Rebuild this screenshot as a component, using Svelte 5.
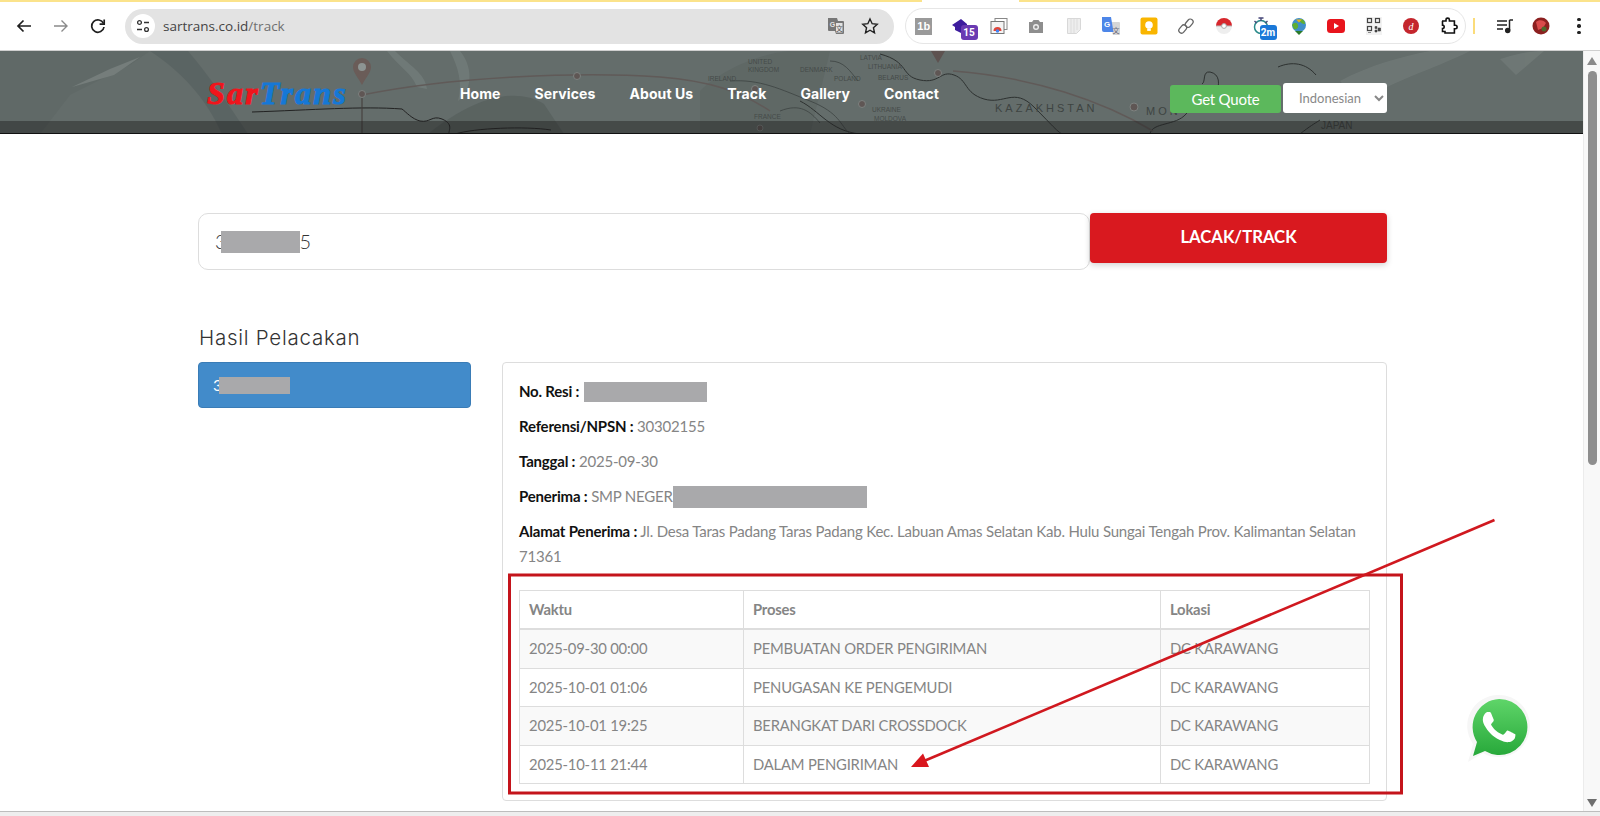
<script>
	var rows = [
		{ time: '2025-09-30 00:00', process: 'PEMBUATAN ORDER PENGIRIMAN', place: 'DC KARAWANG' },
		{ time: '2025-10-01 01:06', process: 'PENUGASAN KE PENGEMUDI', place: 'DC KARAWANG' },
		{ time: '2025-10-01 19:25', process: 'BERANGKAT DARI CROSSDOCK', place: 'DC KARAWANG' },
		{ time: '2025-10-11 21:44', process: 'DALAM PENGIRIMAN', place: 'DC KARAWANG' }
	];
	var nav = ['Home', 'Services', 'About Us', 'Track', 'Gallery', 'Contact'];
</script>

<div class="window">
	<div class="tabstrip"><span class="tabgap"></span></div>
	<div class="toolbar">
		<button class="tool" aria-label="Back">
			<svg width="18" height="18" viewBox="0 0 18 18" fill="none" stroke="#1f1f1f" stroke-width="1.7"><path d="M16 9H3M8.5 3.5 3 9l5.500 5.500" /></svg>
		</button>
		<button class="tool" aria-label="Forward">
			<svg width="18" height="18" viewBox="0 0 18 18" fill="none" stroke="#8a8a8a" stroke-width="1.4"><path d="M2 9h13M9.500 3.500 15 9l-5.500 5.500" /></svg>
		</button>
		<button class="tool" aria-label="Reload">
			<svg width="18" height="18" viewBox="0 0 18 18" fill="none" stroke="#1f1f1f" stroke-width="1.7"><path d="M14.500 6.500A6.200 6.200 0 1 0 15 10" /><path d="M15.200 2.500v4.600h-4.600" /></svg>
		</button>
		<div class="omnibox">
			<span class="siteinfo">
				<svg width="16" height="16" viewBox="0 0 16 16" fill="none" stroke="#333" stroke-width="1.300"><circle cx="4.500" cy="4.500" r="1.900" /><path d="M9 4.500h5M2 11.500h5" /><circle cx="11.500" cy="11.500" r="1.900" /></svg>
			</span>
			<span class="url">sartrans.co.id<span class="urlpath">/track</span></span>
			<svg class="translate" width="20" height="20" viewBox="0 0 20 20"><path d="M2 2h9l1 3h5a1 1 0 0 1 1 1v11a1 1 0 0 1-1 1h-7l-1-3H3a1 1 0 0 1-1-1z" fill="#777" /><rect x="10" y="7" width="6.500" height="9.500" fill="#e3e3e3" /><text x="6.500" y="11" font-size="7" font-weight="700" fill="#e3e3e3" text-anchor="middle" font-family="Liberation Sans, sans-serif">G</text><text x="13.200" y="14.500" font-size="7" fill="#555" text-anchor="middle" font-family="Noto Sans CJK SC, sans-serif">文</text></svg>
			<svg class="star" width="18" height="18" viewBox="0 0 18 18" fill="none" stroke="#222" stroke-width="1.400"><path d="m9 2 2.150 4.700 5.100.600-3.800 3.450 1.050 5.050L9 13.250 4.500 15.800l1.050-5.050-3.800-3.450 5.100-.600z" /></svg>
		</div>
		<div class="extensions">
			<span class="ext"><span class="onebee">1b</span></span>
			<span class="ext">
				<svg width="20" height="20" viewBox="0 0 20 20"><path d="M10 3 1 9l3 2v3l6 3 6-3V8z" fill="#3d1c9e" /></svg>
				<span class="badge purple">15</span>
			</span>
			<span class="ext">
				<svg width="18" height="18" viewBox="0 0 18 18"><rect x="5" y="1.500" width="12" height="11" fill="#fff" stroke="#888" /><rect x="1" y="4.500" width="13" height="12" fill="#f4f4f4" stroke="#777" /><path d="M3.500 14a4 4 0 0 1 8 0z" fill="#e0463a" /><circle cx="7.500" cy="14" r="1.700" fill="#4285f4" /></svg>
			</span>
			<span class="ext">
				<svg width="18" height="18" viewBox="0 0 18 18"><path d="M2 5h3l1.500-2h5L13 5h3v11H2z" fill="#8e8e8e" /><circle cx="9" cy="10" r="3" fill="#eee" /><circle cx="9" cy="10" r="1.600" fill="#8e8e8e" /></svg>
			</span>
			<span class="ext">
				<svg width="18" height="18" viewBox="0 0 18 18"><path d="M2.500 1.500h13v11l-4 4h-9z" fill="#eeeeee" stroke="#d8d8d8" /><path d="M6 2v14M9 2v14M12 2v11" stroke="#dcdcdc" /></svg>
			</span>
			<span class="ext">
				<svg width="20" height="20" viewBox="0 0 20 20"><path d="M9 6h9a1 1 0 0 1 1 1v11a1 1 0 0 1-1 1h-6z" fill="#d6d6d6" /><path d="M1 1h9l2.500 15H3a2 2 0 0 1-2-2z" fill="#4d86e8" /><text x="6" y="11" font-size="8" font-weight="700" fill="#fff" text-anchor="middle" font-family="Liberation Sans, sans-serif">G</text><text x="15" y="16.500" font-size="7" fill="#667" text-anchor="middle" font-family="Noto Sans CJK SC, sans-serif">文</text></svg>
			</span>
			<span class="ext">
				<svg width="18" height="18" viewBox="0 0 18 18"><rect x="0.500" y="0.500" width="17" height="17" rx="2" fill="#f9b500" /><circle cx="9" cy="8" r="3.800" fill="#fff" /><rect x="7.200" y="11.500" width="3.600" height="2.400" fill="#fff" /></svg>
			</span>
			<span class="ext">
				<svg width="18" height="18" viewBox="0 0 18 18" fill="none" stroke="#666" stroke-width="1.300"><rect x="9.500" y="1.500" width="5.500" height="9" rx="2.700" transform="rotate(40 12 6)" /><rect x="3" y="7.500" width="5.500" height="9" rx="2.700" transform="rotate(40 5.700 12)" /></svg>
			</span>
			<span class="ext">
				<svg width="18" height="18" viewBox="0 0 18 18"><circle cx="9" cy="9" r="8" fill="#eee" /><path d="M1 9a8 8 0 0 1 16 0z" fill="#d8262c" /><path d="M1 9h16" stroke="#bbb" /><circle cx="9" cy="9" r="2.400" fill="#fff" stroke="#aaa" /></svg>
			</span>
			<span class="ext">
				<svg width="18" height="20" viewBox="0 0 18 20"><circle cx="9" cy="11" r="6.500" fill="none" stroke="#2a8a8a" stroke-width="1.500" /><path d="M6.500 2h5M9 2v3M2.500 5l2 2M15.500 5l-2 2" stroke="#447" stroke-width="1.300" /></svg>
				<span class="badge blue">2m</span>
			</span>
			<span class="ext">
				<svg width="20" height="20" viewBox="0 0 20 20"><circle cx="10" cy="9" r="7" fill="#3f8fc9" /><path d="M3 9c2-3 5-3 6 0s-2 5-4 4zM11 3c3 0 5 2 5 5-2 0-6-1-5-5z" fill="#5fae32" /><path d="M6 15h8l-4 4z" fill="#2c7a2a" /><path d="M7 3.500h6l-3 3z" fill="#e8b21a" /></svg>
			</span>
			<span class="ext">
				<svg width="18" height="14" viewBox="0 0 18 14"><rect width="18" height="14" rx="3.500" fill="#e8141c" /><path d="M7 4v6l5-3z" fill="#fff" /></svg>
			</span>
			<span class="ext">
				<svg width="16" height="18" viewBox="0 0 16 18"><rect width="16" height="18" fill="#f2f2f2" /><g fill="none" stroke="#444" stroke-width="1.200"><rect x="1.500" y="1.500" width="4" height="4" /><rect x="9.500" y="1.500" width="4" height="4" /><rect x="1.500" y="9.500" width="4" height="4" /></g><path d="M9 9.500h2v2H9zM12 11h2.500v3H12zM9 13h2v2H9zM2 15.500h3" fill="#444" stroke="#444" stroke-width=".6" /></svg>
			</span>
			<span class="ext">
				<svg width="18" height="18" viewBox="0 0 18 18"><circle cx="9" cy="9" r="8" fill="#c4262d" /><text x="9" y="12.500" font-size="10" fill="#fff" text-anchor="middle" font-family="Liberation Serif, serif" font-style="italic">d</text></svg>
			</span>
			<span class="ext">
				<svg width="18" height="18" viewBox="0 0 18 18" fill="none" stroke="#111" stroke-width="1.600"><path d="M2 4h4V2.800a1.700 1.700 0 0 1 3.400 0V4h5v4.300h1a1.700 1.700 0 0 1 0 3.400h-1V16H5v-1.500H2.500v-3a1.700 1.700 0 0 0 0-3.400V4z" /></svg>
			</span>
		</div>
		<span class="divider"></span>
		<button class="tool music" aria-label="Media">
			<svg width="18" height="18" viewBox="0 0 18 18" fill="none" stroke="#222" stroke-width="1.500"><path d="M1 4h10M1 8h10M1 12h6" /><path d="M13.500 3v10.500" /><path d="M13.500 3H17" /><circle cx="11.700" cy="13.500" r="2" fill="#222" /></svg>
		</button>
		<span class="avatar"><svg width="18" height="18" viewBox="0 0 18 18"><circle cx="9" cy="9" r="8.500" fill="#8c2020" /><path d="M4 5c3-3 8-2 10 1l-3 5-5 2z" fill="#d94b4b" /><circle cx="12" cy="12" r="2.500" fill="#4a6a2c" /></svg></span>
		<span class="dots" aria-hidden="true"><i></i><i></i><i></i></span>
	</div>

	<div class="viewport">
		<div class="page">
			<header class="site-header">
				<svg class="map" viewBox="0 0 1583 83" width="1583" height="83" aria-hidden="true">
					<g opacity="0.45">
						<path d="M0 0h150l-20 14-60 30-30 39H0z" fill="#5c6563" />
						<path d="M150 0c30 20 55 45 72 83h26c-20-30-40-60-60-83z" fill="#505a5a" />
						<path d="M72 36 110 18l30-12-26 18z" fill="#8a9290" />
						<path d="M395 0c15 15 30 22 32 38l-10-2c-6-15-18-20-30-36zM460 0c12 14 14 38-2 50 5-18 0-34-8-50z" fill="#7e8986" />
						<path d="M1340 30c30-16 60-24 90-30h40c-40 20-80 30-110 52z" fill="#7a8381" />
						<path d="M1500 8c20-6 30-8 44-8l-28 24z" fill="#7c8583" />
						<path d="M700 40c20-20 60-38 90-40h40l-20 83H700z" fill="#59625f" />
						<path d="M428 83c50-40 90-46 116-30l20 30z" fill="#4e5754" />
					</g>
					<path d="M252 61c60-2 110-6 150-3 4 3 10 10 18 12 10 2 12-6 22-2 14 6 4 14 8 15M455 83c20-6 70-8 96-4" fill="none" stroke="#222" stroke-width="1" />
					<path d="M800 50c20 10 30 30 60 33M880 3c30 8 20 22 40 26s20-10 34-5 10 18 30 24 30-12 50 8 26 28 30 27M1150 83c2-12 26-8 36-20 8-10 22-4 30-20 4-10 4-20-6-22-8-1-4 10-8 12M1278 16c14-6 28-4 38 8M1300 83c10-8 14-10 20-14" fill="none" stroke="#2d3130" stroke-width="1" />
					<path d="M730 30c30-2 50 8 80 20s30 24 40 33M780 60c20-8 30 0 40 12M830 10c14 0 20 10 28 20" fill="none" stroke="#3c4241" stroke-width=".8" />
					<path d="M362 44C450 26 580 20 660 26c50 4 80 14 110 34" fill="none" stroke="#605a58" stroke-width="1.500" />
					<path d="M953 20c80 6 150 30 200 60" fill="none" stroke="#605a58" stroke-width="1.500" />
					<path d="M362 43V83" stroke="#403a38" stroke-width="1" />
					<path d="M362 34c-5-9-9-13-9-18a9 9 0 0 1 18 0c0 5-4 9-9 18z" fill="#6a5c58" />
					<circle cx="362" cy="16" r="4" fill="#8d9492" />
					<path d="M931 0h14l-7 12z" fill="#5d5250" />
					<g fill="#5f5654" stroke="#7d8280" stroke-width="1">
						<circle cx="362" cy="43" r="3.500" />
						<circle cx="577" cy="25" r="3.500" />
						<circle cx="755" cy="38" r="3.500" />
						<circle cx="760" cy="77" r="3" />
						<circle cx="862" cy="53" r="3.500" />
						<circle cx="938" cy="22" r="3.500" />
						<circle cx="1134" cy="56" r="4" />
					</g>
					<g font-family="Liberation Sans, sans-serif" fill="#454b49" font-size="6.500">
						<text x="748" y="13">UNITED</text>
						<text x="748" y="21">KINGDOM</text>
						<text x="708" y="30">IRELAND</text>
						<text x="754" y="68">FRANCE</text>
						<text x="860" y="9">LATVIA</text>
						<text x="868" y="18">LITHUANIA</text>
						<text x="800" y="21">DENMARK</text>
						<text x="878" y="29">BELARUS</text>
						<text x="834" y="30">POLAND</text>
						<text x="872" y="61">UKRAINE</text>
						<text x="874" y="70">MOLDOVA</text>
					</g>
					<g font-family="Liberation Sans, sans-serif" fill="#3e4442">
						<text x="995" y="61" font-size="11" letter-spacing="3">KAZAKHSTAN</text>
						<text x="1146" y="64" font-size="11" letter-spacing="3">MON</text>
						<text x="1321" y="78" font-size="10">JAPAN</text>
					</g>
				</svg>
				<span class="band"></span>
				<div class="header-inner">
					<span class="logo"><span class="sar">Sar</span><span class="trans">Trans</span></span>
					<nav>
						{#each nav as item}
							<span class="nav-link">{item}</span>
						{/each}
					</nav>
					<div class="header-actions">
						<span class="quote">Get Quote</span>
						<select class="lang">
							<option>Indonesian</option>
							<option>English</option>
						</select>
					</div>
				</div>
			</header>

			<main class="content">
				<div class="search">
					<div class="search-input">3<span class="redact input-redact"></span>5</div>
					<button class="track-btn">LACAK/TRACK</button>
				</div>

				<h2>Hasil Pelacakan</h2>

				<div class="results">
					<div class="result-tab">3<span class="redact tab-redact"></span></div>
					<section class="card">
						<p><b>No. Resi :</b> <span class="redact resi-redact"></span></p>
						<p><b>Referensi/NPSN :</b> 30302155</p>
						<p><b>Tanggal :</b> 2025-09-30</p>
						<p><b>Penerima :</b> SMP NEGERI<span class="redact name-redact"></span></p>
						<p><b>Alamat Penerima :</b> Jl. Desa Taras Padang Taras Padang Kec. Labuan Amas Selatan Kab. Hulu Sungai Tengah Prov. Kalimantan Selatan 71361</p>
						<table>
							<thead>
								<tr><th class="col-time">Waktu</th><th class="col-proc">Proses</th><th>Lokasi</th></tr>
							</thead>
							<tbody>
								{#each rows as row}
									<tr><td>{row.time}</td><td>{row.process}</td><td>{row.place}</td></tr>
								{/each}
							</tbody>
						</table>
					</section>
				</div>
			</main>
		</div>
		<div class="scrollbar">
			<span class="arrow up"></span>
			<span class="thumb"></span>
			<span class="arrow down"></span>
		</div>
	</div>
	<div class="bottom-strip"></div>

	<svg class="annotation" width="1600" height="816" viewBox="0 0 1600 816" aria-hidden="true">
		<rect x="509.500" y="575" width="892" height="218" fill="none" stroke="#c4141b" stroke-width="3" />
		<path d="M1494.500 520 924 761" stroke="#d0181f" stroke-width="2.600" fill="none" />
		<path d="M911 767 923 753.500 929 767z" fill="#d9161d" />
	</svg>

	<svg class="whatsapp" width="66" height="70" viewBox="0 0 66 70" aria-label="WhatsApp">
		<defs>
			<linearGradient id="wa" x1="0" y1="0" x2="0" y2="1">
				<stop offset="0" stop-color="#5fd569" />
				<stop offset="1" stop-color="#27a83a" />
			</linearGradient>
		</defs>
		<path d="M33 1a31 31 0 0 1 0 62c-6 0-11-1-16-4L2 68l5-18A31 31 0 0 1 33 1z" fill="#f6f6f6" />
		<path d="M33 5a28 28 0 1 1-14 52L7 62l4-14A28 28 0 0 1 33 5z" fill="url(#wa)" />
		<g transform="translate(0.600 0.600) scale(2.700)">
			<path fill="#fff" d="M17.472 14.382c-.297-.149-1.758-.867-2.03-.967-.273-.099-.471-.148-.67.15-.197.297-.767.966-.94 1.164-.173.199-.347.223-.644.075-.297-.15-1.255-.463-2.39-1.475-.883-.788-1.48-1.761-1.653-2.059-.173-.297-.018-.458.13-.606.134-.133.298-.347.446-.52.149-.174.198-.298.298-.497.099-.198.05-.371-.025-.52-.075-.149-.669-1.612-.916-2.207-.242-.579-.487-.5-.669-.51-.173-.008-.371-.01-.57-.01-.198 0-.52.074-.792.372-.272.297-1.04 1.016-1.04 2.479 0 1.462 1.065 2.875 1.213 3.074.149.198 2.096 3.2 5.077 4.487.709.306 1.262.489 1.694.625.712.227 1.36.195 1.871.118.571-.085 1.758-.719 2.006-1.413.248-.694.248-1.289.173-1.413-.074-.124-.272-.198-.57-.347z" />
		</g>
	</svg>
</div>

<style>
	:global(body) {
		margin: 0;
		background: #fff;
	}

	.window {
		position: relative;
		width: 1600px;
		height: 816px;
		overflow: hidden;
		display: flex;
		flex-direction: column;
		font-family: 'Lato', sans-serif;
		color: #858585;
		background: #fff;
	}

	.tabstrip {
		height: 2px;
		background: #fbe38b;
		display: flex;
		padding-left: 922px;
	}

	.tabgap {
		width: 97px;
		background: #fff;
	}

	.toolbar {
		height: 48px;
		display: flex;
		align-items: center;
		padding-left: 5px;
		border-bottom: 1px solid #cfcfcf;
		box-sizing: content-box;
	}

	.tool {
		width: 37px;
		height: 32px;
		padding: 0;
		border: 0;
		background: none;
		display: flex;
		align-items: center;
		justify-content: center;
		flex: none;
	}

	.omnibox {
		margin-left: 9px;
		width: 769px;
		height: 35px;
		border-radius: 18px;
		background: #e3e3e3;
		display: flex;
		align-items: center;
		padding: 0 6px;
		box-sizing: border-box;
		flex: none;
	}

	.siteinfo {
		width: 24px;
		height: 24px;
		border-radius: 50%;
		background: #fff;
		display: flex;
		align-items: center;
		justify-content: center;
		flex: none;
	}

	.url {
		margin-left: 8px;
		font-family: 'Open Sans', sans-serif;
		font-size: 13.500px;
		color: #444;
	}

	.urlpath {
		color: #707070;
	}

	.translate {
		margin-left: auto;
	}

	.star {
		margin: 0 9px 0 15px;
	}

	.extensions {
		margin-left: 11px;
		width: 561px;
		height: 36px;
		border: 1px solid #e6e6e6;
		border-radius: 18px;
		box-sizing: border-box;
		display: flex;
		align-items: center;
		flex: none;
	}

	.ext {
		position: relative;
		width: 37.500px;
		height: 24px;
		display: flex;
		align-items: center;
		justify-content: center;
		flex: none;
	}

	.ext:first-child {
		margin-left: -1px;
	}

	.onebee {
		width: 17px;
		height: 17px;
		background: #9a9a9a;
		color: #fff;
		font: 700 11px/17px 'Liberation Sans', sans-serif;
		text-align: center;
	}

	.badge {
		position: absolute;
		left: 18px;
		top: 11px;
		min-width: 17px;
		height: 15px;
		border-radius: 3px;
		color: #fff;
		font: 700 10px/15px 'Roboto', sans-serif;
		text-align: center;
	}

	.purple {
		background: #6a3ab2;
	}

	.blue {
		background: #1a78d8;
		left: 17px;
	}

	.divider {
		width: 2px;
		height: 16px;
		margin-left: 7px;
		background: #fbdc7a;
		flex: none;
	}

	.music {
		margin-left: 11px;
	}

	.avatar {
		margin-left: 1px;
		width: 34px;
		display: flex;
		justify-content: center;
		flex: none;
	}

	.dots {
		margin-left: 19px;
		display: flex;
		flex-direction: column;
		gap: 3px;
		flex: none;
	}

	.dots i {
		width: 3.500px;
		height: 3.500px;
		border-radius: 50%;
		background: #222;
	}

	.viewport {
		flex: 1;
		display: flex;
		min-height: 0;
	}

	.page {
		flex: 1;
		min-width: 0;
		overflow: hidden;
	}

	.site-header {
		position: relative;
		height: 83px;
		background: #646d6b;
		overflow: hidden;
	}

	.map {
		position: absolute;
		left: 0;
		top: 0;
	}

	.band {
		position: absolute;
		left: 0;
		right: 0;
		bottom: 0;
		height: 13px;
		background: rgba(30, 30, 30, 0.45);
		border-bottom: 1px solid #111;
		box-sizing: border-box;
	}

	.header-inner {
		position: relative;
		width: 1189px;
		margin-left: 198px;
		height: 100%;
		display: flex;
		align-items: flex-start;
	}

	.logo {
		margin: 24px 0 0 9px;
		width: 253px;
		font: italic 700 32px/36px 'Liberation Serif', serif;
		letter-spacing: 2.200px;
		-webkit-text-stroke: 1px currentColor;
	}

	.sar {
		color: #f0141c;
	}

	.trans {
		color: #1578d6;
	}

	nav {
		display: flex;
		gap: 34px;
		margin-top: 34px;
	}

	.nav-link {
		font-family: 'Inter', sans-serif;
		font-weight: 700;
		font-size: 14px;
		line-height: 18px;
		letter-spacing: 0.1px;
		color: #fff;
	}

	.header-actions {
		margin-left: auto;
		margin-top: 32px;
		display: flex;
		align-items: flex-end;
		gap: 2px;
	}

	.quote {
		width: 111px;
		height: 28px;
		border-radius: 3px;
		background: #5cb85c;
		color: #fff;
		font-size: 15px;
		letter-spacing: -0.2px;
		line-height: 28px;
		text-align: center;
	}

	.lang {
		width: 104px;
		height: 30px;
		border: 0;
		border-radius: 3px;
		background: #fff;
		color: #888;
		font-family: 'Lato', sans-serif;
		font-size: 13px;
		padding-left: 12px;
	}

	.content {
		width: 1189px;
		margin-left: 198px;
	}

	.search {
		display: flex;
		align-items: flex-start;
		margin-top: 79px;
	}

	.search-input {
		width: 892px;
		height: 57px;
		box-sizing: border-box;
		border: 1px solid #ddd;
		border-radius: 10px;
		padding-left: 16px;
		font-size: 20px;
		line-height: 55px;
		font-weight: 300;
		color: #333;
		display: flex;
		align-items: center;
	}

	.redact {
		background: #a9a9ab;
		display: inline-block;
		vertical-align: middle;
	}

	.input-redact {
		width: 79px;
		height: 22px;
		margin-left: -6px;
	}

	.track-btn {
		width: 297px;
		height: 50px;
		border: 0;
		border-radius: 4px;
		background: #d9191f;
		color: #fff;
		font-family: 'Lato', sans-serif;
		font-weight: 700;
		font-size: 16.700px;
		box-shadow: 0 2px 6px rgba(0, 0, 0, 0.18);
		padding: 0 0 3px;
	}

	h2 {
		margin: 54px 0 11px 1px;
		font-family: 'Inter', sans-serif;
		font-weight: 300;
		font-size: 20.500px;
		line-height: 27px;
		letter-spacing: 0.75px;
		color: #333;
	}

	.results {
		display: flex;
		align-items: flex-start;
		gap: 31px;
	}

	.result-tab {
		width: 273px;
		height: 46px;
		box-sizing: border-box;
		flex: none;
		border: 1px solid #3a7cb6;
		border-radius: 4px;
		background: #428bca;
		color: #fff;
		font-size: 16px;
		line-height: 44px;
		padding-left: 14px;
		display: flex;
		align-items: center;
	}

	.tab-redact {
		width: 71px;
		height: 17px;
		margin-left: -3px;
	}

	.card {
		width: 885px;
		box-sizing: border-box;
		border: 1px solid #ddd;
		border-radius: 4px;
		padding: 16px;
		font-size: 15px;
		letter-spacing: -0.2px;
		line-height: 25px;
	}

	p {
		margin: 0 0 10px;
	}

	b {
		font-weight: 700;
		color: #111;
	}

	.resi-redact {
		width: 123px;
		height: 20px;
		margin-left: 1px;
		vertical-align: -5px;
	}

	.name-redact {
		width: 194px;
		height: 22px;
		margin-left: -4px;
		vertical-align: -6px;
	}

	table {
		width: 851px;
		margin-top: 21px;
		border-collapse: collapse;
		table-layout: fixed;
		font-size: 14.800px;
		letter-spacing: -0.2px;
		line-height: 21.400px;
	}

	th,
	td {
		border: 1px solid #ddd;
		padding: 8px 9px;
		text-align: left;
		font-weight: 400;
	}

	th {
		font-weight: 700;
		border-bottom-width: 2px;
	}

	.col-time {
		width: 205px;
	}

	.col-proc {
		width: 398px;
	}

	tbody tr:nth-child(odd) {
		background: #f9f9f9;
	}

	.scrollbar {
		position: relative;
		width: 17px;
		flex: none;
		background: #f8f8f8;
		border-left: 1px solid #ececec;
		box-sizing: border-box;
		display: flex;
		flex-direction: column;
		align-items: center;
	}

	.arrow {
		width: 0;
		height: 0;
		border-left: 5px solid transparent;
		border-right: 5px solid transparent;
	}

	.up {
		margin-top: 6px;
		border-bottom: 8px solid #8a8a8a;
	}

	.down {
		margin-top: auto;
		margin-bottom: 4px;
		border-top: 8px solid #6e6e6e;
	}

	.thumb {
		width: 9px;
		height: 394px;
		margin-top: 6px;
		border-radius: 5px;
		background: #8e8e8e;
	}

	.bottom-strip {
		height: 5px;
		background: #eeeeee;
		border-top: 1px solid #bdbdbd;
		box-sizing: border-box;
		flex: none;
	}

	.annotation {
		position: absolute;
		left: 0;
		top: 0;
		pointer-events: none;
	}

	.whatsapp {
		position: absolute;
		left: 1466px;
		top: 694px;
	}
</style>
